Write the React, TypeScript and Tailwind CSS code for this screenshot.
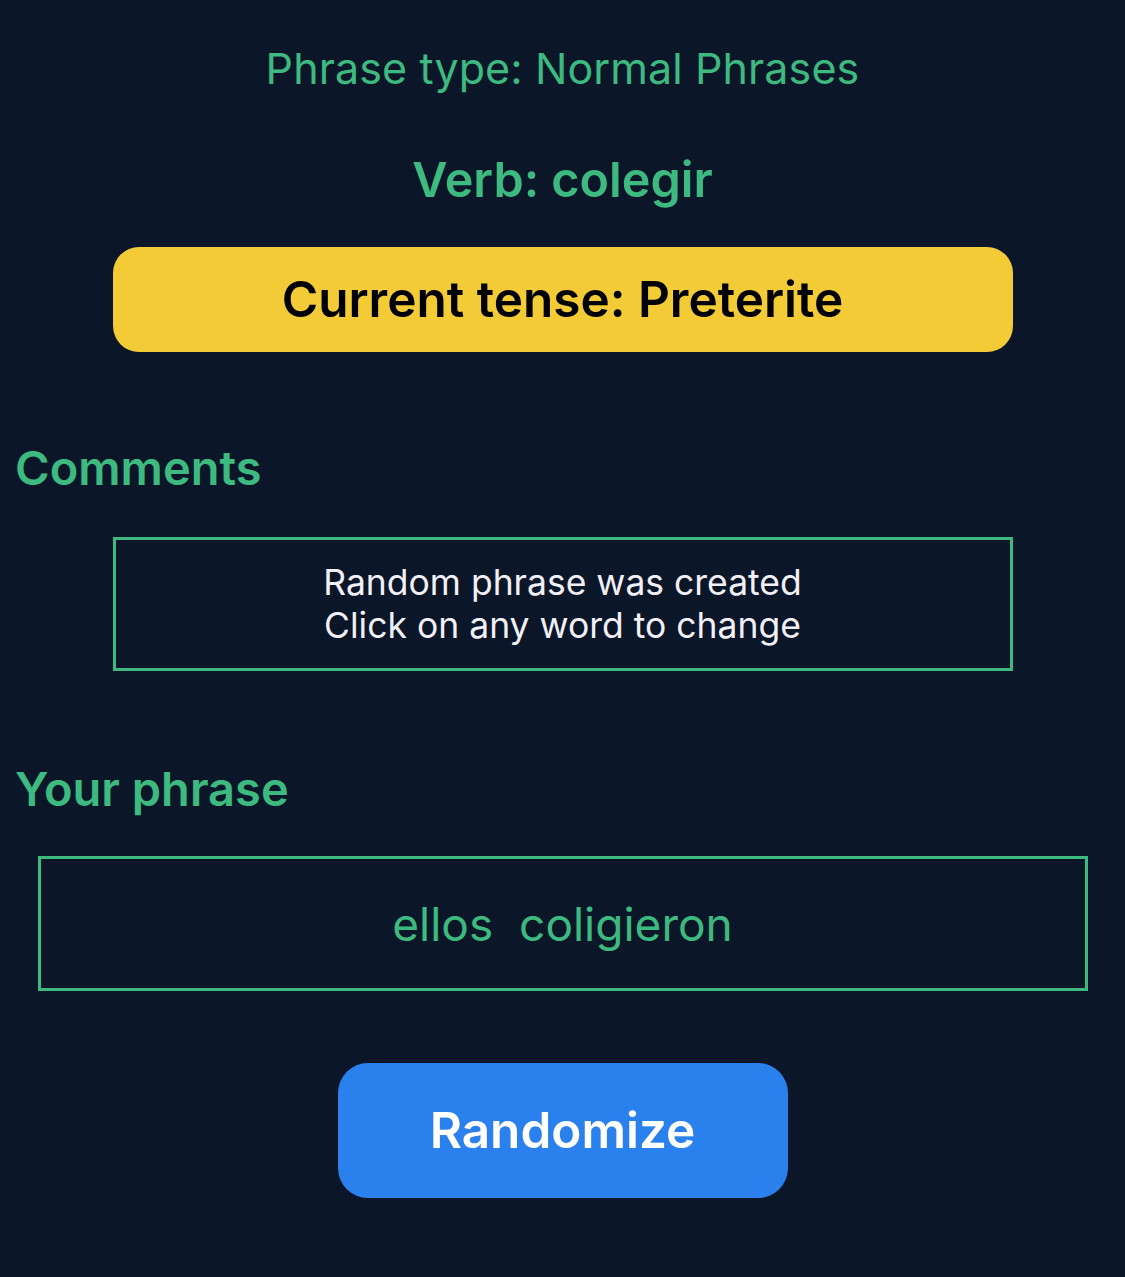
import React from "react";

export default function App() {
  const font = { fontFamily: "Inter, 'Noto Sans', sans-serif" };
  return (
    <div
      className="min-h-[1277px] w-full bg-[#0c1629] flex flex-col items-center pt-[41px]"
      style={font}
    >
      <div className="text-[43px] leading-[54px] text-[#3dba7f] font-normal tracking-[0.1px]">
        Phrase type: Normal Phrases
      </div>
      <div className="mt-[56px] text-[48.5px] leading-[58px] text-[#3dba7f] font-semibold">
        Verb: colegir
      </div>
      <div className="mt-[38px] w-[900px] h-[105px] rounded-[26px] bg-[#f2cb37] flex items-center justify-center">
        <span className="text-[49.5px] font-semibold text-black leading-none">
          Current tense: Preterite
        </span>
      </div>
      <div className="self-stretch px-[15px] mt-[87px] text-[47px] leading-[58px] text-[#3dba7f] font-semibold">
        Comments
      </div>
      <div className="mt-[40px] w-[900px] h-[134px] border-[3px] border-[#3dba7f] flex flex-col items-center justify-center">
        <div className="text-[35.5px] leading-[43px] text-[#f2f0f7] text-center">
          Random phrase was created
          <br />
          Click on any word to change
        </div>
      </div>
      <div className="self-stretch px-[15px] mt-[89px] text-[47px] leading-[58px] text-[#3dba7f] font-semibold">
        Your phrase
      </div>
      <div className="mt-[38px] w-[1050px] h-[135px] border-[3px] border-[#3dba7f] flex items-center justify-center">
        <span className="text-[46px] text-[#3dba7f] whitespace-pre leading-none">
          ellos  coligieron
        </span>
      </div>
      <button className="mt-[72px] w-[450px] h-[135px] rounded-[30px] bg-[#2a80ec] flex items-center justify-center">
        <span className="text-[49.5px] font-semibold text-white leading-none">Randomize</span>
      </button>
    </div>
  );
}
